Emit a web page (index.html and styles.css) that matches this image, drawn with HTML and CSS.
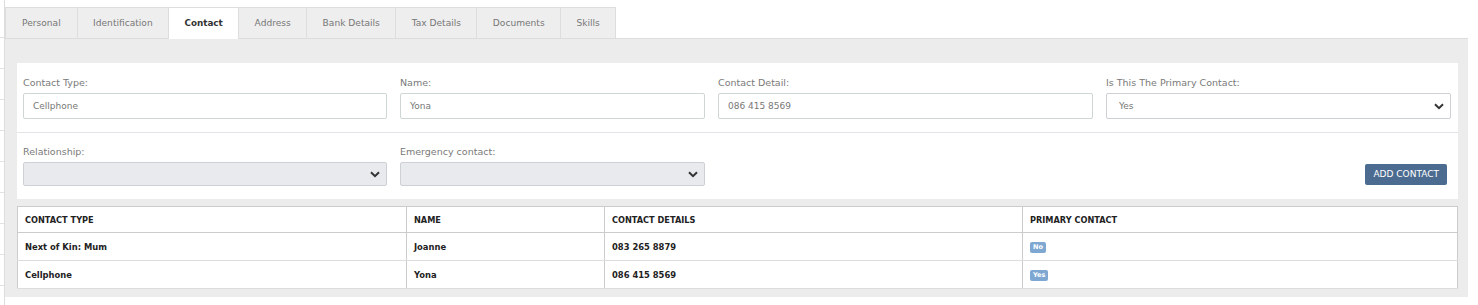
FILE: index.html
```html
<!DOCTYPE html>
<html lang="en">
<head>
    <meta charset="UTF-8">
    <title>Employee - Contact</title>
    <link rel="stylesheet" href="styles.css">
</head>
<body>
    <div class="side">
        <div class="side-row"></div>
        <div class="side-row"></div>
        <div class="side-row"></div>
        <div class="side-row"></div>
        <div class="side-row"></div>
        <div class="side-row"></div>
        <div class="side-row"></div>
        <div class="side-row"></div>
        <div class="side-row"></div>
    </div>

    <div class="main">
        <ul class="tabs">
            <li>Personal</li>
            <li>Identification</li>
            <li class="active">Contact</li>
            <li>Address</li>
            <li>Bank Details</li>
            <li>Tax Details</li>
            <li>Documents</li>
            <li>Skills</li>
        </ul>

        <div class="panel">
            <div class="form-card">
                <div class="form-row">
                    <div class="field">
                        <label>Contact Type:</label>
                        <div class="input">Cellphone</div>
                    </div>
                    <div class="field">
                        <label>Name:</label>
                        <div class="input">Yona</div>
                    </div>
                    <div class="field">
                        <label>Contact Detail:</label>
                        <div class="input">086 415 8569</div>
                    </div>
                    <div class="field">
                        <label>Is This The Primary Contact:</label>
                        <div class="select select-white">
                            <span>Yes</span>
                            <svg width="10" height="7" viewBox="0 0 10 7"><path d="M1 1.2 L5 5.2 L9 1.2" fill="none" stroke="#333" stroke-width="2"/></svg>
                        </div>
                    </div>
                </div>

                <div class="form-row second">
                    <div class="field">
                        <label>Relationship:</label>
                        <div class="select">
                            <span></span>
                            <svg width="10" height="7" viewBox="0 0 10 7"><path d="M1 1.2 L5 5.2 L9 1.2" fill="none" stroke="#333" stroke-width="2"/></svg>
                        </div>
                    </div>
                    <div class="field">
                        <label>Emergency contact:</label>
                        <div class="select">
                            <span></span>
                            <svg width="10" height="7" viewBox="0 0 10 7"><path d="M1 1.2 L5 5.2 L9 1.2" fill="none" stroke="#333" stroke-width="2"/></svg>
                        </div>
                    </div>
                    <div class="actions">
                        <a href="#" class="add-btn">ADD CONTACT</a>
                    </div>
                </div>
            </div>

            <table class="contacts">
                <thead>
                    <tr>
                        <th class="col-type">CONTACT TYPE</th>
                        <th class="col-name">NAME</th>
                        <th class="col-detail">CONTACT DETAILS</th>
                        <th>PRIMARY CONTACT</th>
                    </tr>
                </thead>
                <tbody>
                    <tr>
                        <td>Next of Kin: Mum</td>
                        <td>Joanne</td>
                        <td>083 265 8879</td>
                        <td><span class="badge">No</span></td>
                    </tr>
                    <tr>
                        <td>Cellphone</td>
                        <td>Yona</td>
                        <td>086 415 8569</td>
                        <td><span class="badge">Yes</span></td>
                    </tr>
                </tbody>
            </table>
        </div>
    </div>
</body>
</html>
```

FILE: styles.css
```css
body {
    font-family: "DejaVu Sans", sans-serif;
    margin: 0;
    background-color: #fff;
    display: flex;
    align-items: flex-start;
    color: #333;
}
.side {
    width: 5px;
    border-right: 1px solid #ddd;
    height: 305px;
    padding-top: 7px;
    box-sizing: border-box;
}
.side-row {
    height: 30px;
    border-bottom: 1px solid #e2e2e2;
}
.main {
    flex: 1;
    margin-right: 10px;
    padding-top: 7px;
}
.tabs {
    list-style: none;
    margin: 0;
    padding: 0;
    display: flex;
}
.tabs li {
    height: 30px;
    line-height: 30px;
    padding: 0 15.4px;
    font-size: 9.1px;
    color: #777;
    background-color: #eee;
    border: 1px solid #ddd;
    border-bottom: none;
    margin-right: -1px;
}
.tabs li:first-child {
    padding: 0 16px;
}
.tabs li.active {
    background-color: #fff;
    color: #333;
    font-weight: bold;
    font-size: 8.8px;
    position: relative;
    z-index: 1;
    margin-bottom: -1px;
    height: 31px;
}
.panel {
    background-color: #ececec;
    border-top: 1px solid #ddd;
    padding: 24px 10px 8px 12px;
}
.form-card {
    background-color: #fff;
}
.form-row {
    display: grid;
    grid-template-columns: 364px 305px 375px 345px;
    column-gap: 13px;
    padding: 14px 7px 13px 6px;
    border-bottom: 1px solid #e3e3e8;
}
.form-row.second {
    border-bottom: none;
    padding-top: 13px;
    padding-bottom: 13px;
}
.field label {
    display: block;
    font-size: 9.5px;
    line-height: 12px;
    color: #7a7a7a;
    margin-bottom: 4px;
}
.input {
    height: 24px;
    line-height: 24px;
    border: 1px solid #cfd6d6;
    border-radius: 2px;
    padding-left: 9px;
    font-size: 9px;
    color: #777;
}
.select {
    height: 22px;
    border: 1px solid #cdd0d4;
    border-radius: 2px;
    background-color: #e8eaed;
    display: flex;
    align-items: center;
    justify-content: space-between;
    padding: 0 6px 0 12px;
    font-size: 9px;
    color: #777;
}
.select-white {
    height: 24px;
    background-color: #fff;
}
.actions {
    grid-column: 3 / span 2;
    display: flex;
    justify-content: flex-end;
    align-items: flex-end;
    padding-right: 4px;
    padding-bottom: 1px;
}
.add-btn {
    display: inline-block;
    background-color: #4b6b91;
    color: #fff;
    text-decoration: none;
    font-size: 9px;
    height: 21px;
    line-height: 21px;
    padding: 0 8px;
    border-radius: 2px;
}
.contacts {
    width: 100%;
    margin-top: 7px;
    border-collapse: collapse;
    background-color: #fff;
    border: 1px solid #ccc;
}
.contacts th,
.contacts td {
    text-align: left;
    padding: 0 7px;
    font-weight: bold;
    color: #222;
    border-left: 1px solid #ccc;
}
.contacts th {
    height: 25px;
    font-size: 8.2px;
    border-bottom: 1px solid #ccc;
}
.contacts td {
    height: 27px;
    font-size: 8.4px;
    border-bottom: 1px solid #ddd;
}
.col-type {
    width: 374px;
}
.col-name {
    width: 183px;
}
.col-detail {
    width: 403px;
}
.badge {
    display: inline-block;
    background-color: #7ea8d2;
    color: #fff;
    font-size: 6.5px;
    font-weight: bold;
    padding: 2px 3px;
    border-radius: 2px;
    line-height: 7px;
}
```
